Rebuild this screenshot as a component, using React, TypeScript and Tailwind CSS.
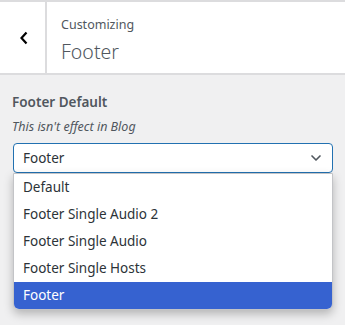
import { ChevronDown } from 'lucide-react';

const options = ['Default', 'Footer Single Audio 2', 'Footer Single Audio', 'Footer Single Hosts', 'Footer'];

export default function App() {
  const selected = 'Footer';

  return (
    <div className="w-[345px] h-[325px] bg-[#f0f0f1] font-['Noto_Sans',sans-serif] overflow-hidden">
      {/* header */}
      <div className="flex h-[75px] bg-white border-t-2 border-b-2 border-[#dcdcde]">
        <button className="w-[47px] flex items-center justify-center border-r-2 border-[#dcdcde]">
          <svg width="10" height="14" viewBox="0 0 10 14" className="ml-[2px]">
            <path d="M7.5 1.5 L2.5 7 L7.5 12.5" fill="none" stroke="#000" strokeWidth="2.2" />
          </svg>
        </button>
        <div className="flex flex-col pl-[14px] pt-[13px]">
          <span className="text-[12.5px] leading-[20px] text-[#50575e]">Customizing</span>
          <span className="text-[19.5px] leading-[28px] mt-[3px] text-[#50575e] font-light">Footer</span>
        </div>
      </div>

      {/* control */}
      <div className="px-[12px] pt-[17px]">
        <div className="text-[13.5px] leading-[20px] font-semibold text-[#50575e]">Footer Default</div>
        <div className="text-[12.5px] leading-[18px] italic text-[#50575e] mt-[6px]">This isn't effect in Blog</div>
        <div className="relative mt-[7px] ml-[1px] w-[320px]">
          <div className="h-[30px] flex items-center justify-between bg-white border border-[#2271b1] rounded-[4px] pl-[9px] pr-[8px] text-[13.5px] text-[#2c3338]">
            <span>{selected}</span>
            <ChevronDown size={16} strokeWidth={2.5} className="text-[#50575e]" />
          </div>
          <ul className="absolute left-0 right-0 top-[30px] bg-white rounded-b-[6px] border border-[#c3c4c7] shadow-[0_4px_10px_rgba(0,0,0,0.25)] overflow-hidden">
            {options.map((o) => (
              <li
                key={o}
                className={
                  o === selected
                    ? 'h-[27px] flex items-center pl-[9px] text-[13.5px] bg-[#3662d0] text-white'
                    : 'h-[27px] flex items-center pl-[9px] text-[13.5px] text-[#2c3338]'
                }
              >
                {o}
              </li>
            ))}
          </ul>
        </div>
      </div>
    </div>
  );
}
